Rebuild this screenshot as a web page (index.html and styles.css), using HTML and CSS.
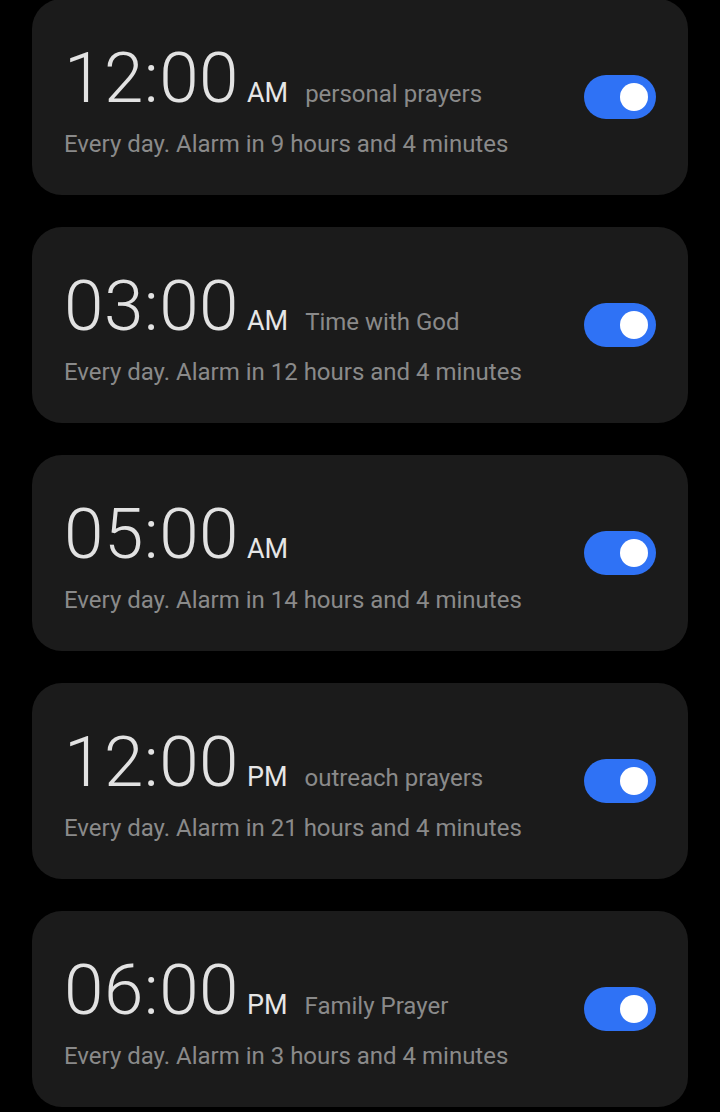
FILE: index.html
```html
<!DOCTYPE html>
<html>
<head>
<meta charset="utf-8">
<link rel="stylesheet" href="styles.css">
</head>
<body>
<div class="list">
  <div class="card">
    <div class="info">
      <div class="top"><span class="time">12:00</span><span class="ampm">AM</span><span class="label">personal prayers</span></div>
      <div class="sub">Every day. Alarm in 9 hours and 4 minutes</div>
    </div>
    <div class="toggle"><span class="knob"></span></div>
  </div>
  <div class="card">
    <div class="info">
      <div class="top"><span class="time">03:00</span><span class="ampm">AM</span><span class="label">Time with God</span></div>
      <div class="sub">Every day. Alarm in 12 hours and 4 minutes</div>
    </div>
    <div class="toggle"><span class="knob"></span></div>
  </div>
  <div class="card">
    <div class="info">
      <div class="top"><span class="time">05:00</span><span class="ampm">AM</span></div>
      <div class="sub">Every day. Alarm in 14 hours and 4 minutes</div>
    </div>
    <div class="toggle"><span class="knob"></span></div>
  </div>
  <div class="card">
    <div class="info">
      <div class="top"><span class="time">12:00</span><span class="ampm">PM</span><span class="label">outreach prayers</span></div>
      <div class="sub">Every day. Alarm in 21 hours and 4 minutes</div>
    </div>
    <div class="toggle"><span class="knob"></span></div>
  </div>
  <div class="card">
    <div class="info">
      <div class="top"><span class="time">06:00</span><span class="ampm">PM</span><span class="label">Family Prayer</span></div>
      <div class="sub">Every day. Alarm in 3 hours and 4 minutes</div>
    </div>
    <div class="toggle"><span class="knob"></span></div>
  </div>
</div>
</body>
</html>
```

FILE: styles.css
```css
html, body {
  margin: 0;
  padding: 0;
  background: #000;
  height: 100%;
  overflow: hidden;
}
body {
  font-family: Roboto, "Noto Sans", sans-serif;
}
.list {
  display: flex;
  flex-direction: column;
  gap: 32px;
  padding: 0 32px;
  margin-top: -1px;
}
.card {
  height: 196px;
  box-sizing: border-box;
  background: #1b1b1b;
  border-radius: 30px;
  display: flex;
  align-items: center;
  padding: 0 32px 0 32px;
}
.info {
  flex: 1;
  align-self: stretch;
  padding-top: 44px;
}
.top {
  display: flex;
  align-items: baseline;
  height: 70px;
}
.time {
  font-size: 71px;
  font-weight: 300;
  line-height: 70px;
  color: #e2e2e2;
  letter-spacing: 0.5px;
}
.ampm {
  font-size: 27px;
  color: #e6e6e6;
  margin-left: 8px;
}
.label {
  font-size: 24px;
  color: #8a8a8a;
  margin-left: 17px;
}
.sub {
  margin-top: 17px;
  font-size: 24px;
  line-height: 28px;
  color: #8a8a8a;
}
.toggle {
  width: 72px;
  height: 44px;
  border-radius: 22px;
  background: #2f72f5;
  display: flex;
  align-items: center;
  justify-content: flex-end;
  padding-right: 8px;
  box-sizing: border-box;
}
.knob {
  width: 28px;
  height: 28px;
  border-radius: 50%;
  background: #fff;
}
```
